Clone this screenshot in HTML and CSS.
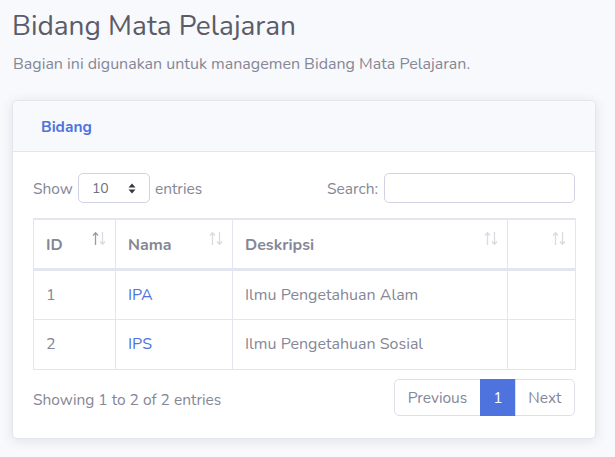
FILE: index.html
```html
<!DOCTYPE html>
<html>
<head>
<meta charset="utf-8">
<link rel="stylesheet" href="styles.css">
</head>
<body>
<div class="page">
  <h1 class="title">Bidang Mata Pelajaran</h1>
  <p class="lead">Bagian ini digunakan untuk managemen Bidang Mata Pelajaran.</p>
  <div class="card">
    <div class="card-header">Bidang</div>
    <div class="card-body">
      <div class="toolbar">
        <label class="length">Show
          <span class="select">10
            <svg class="caret" width="8" height="11" viewBox="0 0 8 11"><path d="M4 0.5 L7.5 4.5 H0.5 Z M4 10.5 L7.5 6.5 H0.5 Z" fill="#343a40"/></svg>
          </span>
          entries</label>
        <label class="search">Search: <span class="input"></span></label>
      </div>
      <table class="table">
        <thead>
          <tr>
            <th class="c-id">ID<svg class="sort" width="14" height="15" viewBox="0 0 14 15"><path d="M3.5 14V2M1 4.5L3.5 1.8L6 4.5" stroke="#9a9ba6" stroke-width="1.3" fill="none"/><path d="M10.5 1V13M8 10.5L10.5 13.2L13 10.5" stroke="#dadbe2" stroke-width="1.3" fill="none"/></svg></th>
            <th class="c-nama">Nama<svg class="sort" width="14" height="15" viewBox="0 0 14 15"><path d="M3.5 14V2M1 4.5L3.5 1.8L6 4.5" stroke="#dadbe2" stroke-width="1.3" fill="none"/><path d="M10.5 1V13M8 10.5L10.5 13.2L13 10.5" stroke="#dadbe2" stroke-width="1.3" fill="none"/></svg></th>
            <th class="c-desc">Deskripsi<svg class="sort" width="14" height="15" viewBox="0 0 14 15"><path d="M3.5 14V2M1 4.5L3.5 1.8L6 4.5" stroke="#dadbe2" stroke-width="1.3" fill="none"/><path d="M10.5 1V13M8 10.5L10.5 13.2L13 10.5" stroke="#dadbe2" stroke-width="1.3" fill="none"/></svg></th>
            <th class="c-act"><svg class="sort" width="14" height="15" viewBox="0 0 14 15"><path d="M3.5 14V2M1 4.5L3.5 1.8L6 4.5" stroke="#dadbe2" stroke-width="1.3" fill="none"/><path d="M10.5 1V13M8 10.5L10.5 13.2L13 10.5" stroke="#dadbe2" stroke-width="1.3" fill="none"/></svg></th>
          </tr>
        </thead>
        <tbody>
          <tr><td>1</td><td><a>IPA</a></td><td>Ilmu Pengetahuan Alam</td><td></td></tr>
          <tr><td>2</td><td><a>IPS</a></td><td>Ilmu Pengetahuan Sosial</td><td></td></tr>
        </tbody>
      </table>
      <div class="footer">
        <div class="info">Showing 1 to 2 of 2 entries</div>
        <div class="pagination">
          <span class="pg">Previous</span><span class="pg active">1</span><span class="pg">Next</span>
        </div>
      </div>
    </div>
  </div>
</div>
</body>
</html>
```
FILE: styles.css
```css
* { box-sizing: border-box; }
html, body { margin: 0; padding: 0; }
body {
  background: #f8f9fc;
  font-family: "Nunito", "Noto Sans", "Open Sans", sans-serif;
  color: #858796;
  font-size: 16px;
  width: 615px;
  height: 457px;
  overflow: hidden;
}
.page { padding: 9px 8px 0 12px; }
.title {
  margin: 0;
  font-size: 28px;
  font-weight: 400;
  line-height: 34px;
  color: #5a5c69;
}
.lead {
  margin: 10px 0 0 1px;
  font-size: 16px;
  line-height: 22px;
}
.card {
  margin-top: 25px;
  background: #fff;
  border: 1px solid #e3e6f0;
  border-radius: 5px;
  box-shadow: 0 2px 12px rgba(58,59,69,0.12);
  width: 584px;
}
.card-header {
  background: #f8f9fc;
  border-bottom: 1px solid #e3e6f0;
  height: 51px;
  padding: 0 28px;
  display: flex;
  align-items: center;
  color: #4e73df;
  font-weight: 700;
  font-size: 15.5px;
  border-radius: 5px 5px 0 0;
}
.card-body { padding: 21px 20px 22px 20px; }
.toolbar {
  display: flex;
  justify-content: space-between;
  align-items: center;
  font-size: 15.5px;
  height: 30px;
}
.length, .search { display: flex; align-items: center; gap: 4px; }
.search { gap: 6px; }
.select {
  width: 72px;
  height: 30px;
  border: 1px solid #d1d3e2;
  border-radius: 5px;
  display: flex;
  align-items: center;
  justify-content: space-between;
  padding: 0 13px 0 13px;
  color: #6e707e;
  font-size: 14px;
  margin: 0 1px;
}
.input {
  width: 191px;
  height: 30px;
  border: 1px solid #d1d3e2;
  border-radius: 5px;
  display: block;
}
.table {
  margin-top: 15px;
  width: 542px;
  border-collapse: collapse;
  border: 1px solid #e3e6f0;
  table-layout: fixed;
}
.table th, .table td {
  border: 1px solid #e3e6f0;
  padding: 0 12px;
  text-align: left;
  height: 50px;
  font-size: 16px;
}
.table th {
  position: relative;
  font-weight: 700;
  border-bottom: 3px solid #e3e6f0;
  border-top: 2px solid #e3e6f0;
  padding-top: 3px;
}
.c-id { width: 82px; }
.c-nama { width: 117px; }
.c-desc { width: 275px; }
.c-act { width: 68px; }
.sort {
  position: absolute;
  right: 9px;
  top: 11px;
}
.table td a { color: #4e73df; }
.footer {
  margin-top: 9px;
  display: flex;
  justify-content: space-between;
  align-items: center;
  font-size: 15.5px;
}
.info { padding-top: 5px; }
.pagination { display: flex; }
.pg {
  height: 37px;
  display: flex;
  align-items: center;
  padding: 0 12.5px;
  border: 1px solid #dddfeb;
  color: #858796;
  margin-left: -1px;
}
.pg:first-child { border-radius: 5px 0 0 5px; }
.pg:last-child { border-radius: 0 5px 5px 0; }
.pg.active {
  background: #4e73df;
  border-color: #4e73df;
  color: #fff;
  width: 36px;
  justify-content: center;
  padding: 0;
}
```
